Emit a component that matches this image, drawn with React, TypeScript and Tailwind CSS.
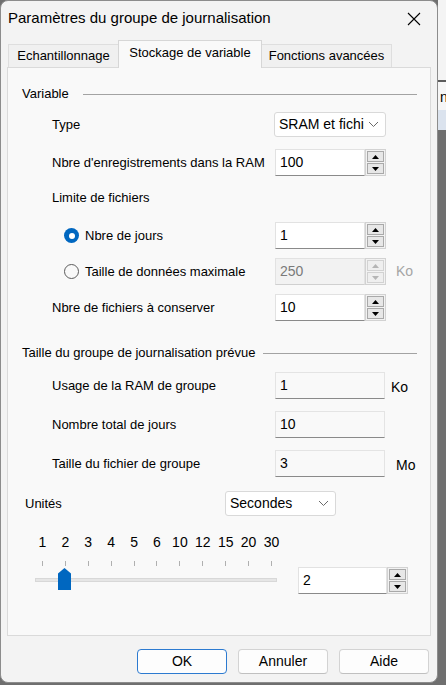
const font = "font-['Liberation_Sans',Arial,sans-serif]";

function Tri({ up, color = "#000" }: { up?: boolean; color?: string }) {
  return (
    <svg width="7" height="4" viewBox="0 0 7 4">
      <path d={up ? "M0 4 L3.5 0 L7 4Z" : "M0 0 L3.5 4 L7 0Z"} fill={color} />
    </svg>
  );
}

function Chevron() {
  return (
    <svg width="11" height="7" viewBox="0 0 11 7">
      <path d="M1 1 L5.5 5.5 L10 1" fill="none" stroke="#6a6a6a" strokeWidth="1" />
    </svg>
  );
}

function SpinBox({ value, disabled, w = "w-[111px]" }: { value: string; disabled?: boolean; w?: string }) {
  const btn = disabled
    ? "flex flex-1 items-center justify-center border border-[#d2d2d2] bg-[#efefef]"
    : "flex flex-1 items-center justify-center border border-[#a9a9a9] bg-[#e7e7e7]";
  return (
    <div className={`flex h-[27px] ${w}`}>
      <div
        className={`flex flex-1 items-center border border-[#e2e2e2] pl-[4px] text-[14px] ${
          disabled ? "border-b-[#d0d0d0] bg-[#f2f2f2] text-[#7a7a7a]" : "border-b-[#8a8a8a] bg-white text-black"
        }`}
      >
        {value}
      </div>
      <div className="flex w-[21px] flex-col gap-[1px] border border-[#d2d2d2] bg-[#f2f2f2] p-[1px]">
        <div className={btn}>
          <Tri up color={disabled ? "#b5b5b5" : "#000"} />
        </div>
        <div className={btn}>
          <Tri color={disabled ? "#b5b5b5" : "#000"} />
        </div>
      </div>
    </div>
  );
}

function ReadBox({ value }: { value: string }) {
  return (
    <div className="flex h-[27px] w-[110px] items-center border border-[#e4e4e4] border-b-[#8a8a8a] bg-[#f9f9f9] pl-[4px] text-[14px]">
      {value}
    </div>
  );
}

function Select({ value, w }: { value: string; w: string }) {
  return (
    <div className={`flex h-[25px] ${w} items-center overflow-hidden rounded-[3px] border border-[#d9d9d9] bg-white pl-[4px] pr-[6px]`}>
      <span className="flex-1 overflow-hidden whitespace-nowrap text-[14px]">{value}</span>
      <span className="ml-[4px]">
        <Chevron />
      </span>
    </div>
  );
}

function Header({ text, gap }: { text: string; gap: string }) {
  return (
    <div className="flex h-[16px] items-center pl-[14px] pr-[13px]">
      <span>{text}</span>
      <div className={`h-px flex-1 bg-[#a3a3a3] ${gap}`} />
    </div>
  );
}

function Radio({ checked }: { checked?: boolean }) {
  return checked ? (
    <div className="flex h-[15px] w-[15px] items-center justify-center rounded-full bg-[#0067c0]">
      <div className="h-[6px] w-[6px] rounded-full bg-white" />
    </div>
  ) : (
    <div className="h-[15px] w-[15px] rounded-full border border-[#5c5c5c] bg-[#f9f9f9]" />
  );
}

const scale = ["1", "2", "3", "4", "5", "6", "10", "12", "15", "20", "30"];

export default function App() {
  return (
    <div className={`flex h-[685px] w-[446px] bg-[#6f6f6f] text-[13px] text-black ${font}`}>
      <div className="flex h-[683px] w-[438px] flex-col rounded-[8px] border border-[#8c8c8c] bg-[#f3f3f3]">
        {/* title bar */}
        <div className="flex h-[35px] items-center justify-between pl-[7px] pr-[16px]">
          <span className="text-[15px]">Paramètres du groupe de journalisation</span>
          <svg width="14" height="14" viewBox="0 0 14 14">
            <path d="M1 1 L13 13 M13 1 L1 13" stroke="#000" strokeWidth="1.1" />
          </svg>
        </div>

        {/* tabs */}
        <div className="mt-[4px] flex h-[27px] items-end pl-[7px]">
          <div className="flex h-[23px] w-[110px] items-center justify-center border-l border-t border-[#dedede] bg-[#f0f0f0]">
            Echantillonnage
          </div>
          <div className="relative z-10 mb-[-1px] flex h-[28px] w-[144px] items-center justify-center border-x border-t border-[#d6d6d6] bg-[#f9f9f9] pb-[3px]">
            Stockage de variable
          </div>
          <div className="flex h-[23px] w-[130px] items-center justify-center border-r border-t border-[#dedede] bg-[#f0f0f0]">
            Fonctions avancées
          </div>
        </div>

        {/* panel */}
        <div className="mx-[6px] flex h-[569px] flex-col border border-[#dadada] bg-[#f9f9f9] pt-[18px]">
          <Header text="Variable" gap="ml-[14px]" />

          <div className="mt-[10px] flex h-[25px] items-center pl-[44px]">
            <span className="w-[222px]">Type</span>
            <Select value="SRAM et fichiers" w="w-[112px]" />
          </div>

          <div className="mt-[12px] flex h-[27px] items-center pl-[44px]">
            <span className="w-[223px]">Nbre d'enregistrements dans la RAM</span>
            <SpinBox value="100" />
          </div>

          <div className="mt-[14px] flex h-[16px] items-center pl-[44px]">Limite de fichiers</div>

          <div className="mt-[16px] flex h-[27px] items-center pl-[56px]">
            <span className="flex w-[211px] items-center gap-[6px]">
              <Radio checked />
              Nbre de jours
            </span>
            <SpinBox value="1" />
          </div>

          <div className="mt-[9px] flex h-[27px] items-center pl-[56px]">
            <span className="flex w-[211px] items-center gap-[6px]">
              <Radio />
              Taille de données maximale
            </span>
            <SpinBox value="250" disabled />
            <span className="ml-[10px] text-[14px] text-[#a5a5a5]">Ko</span>
          </div>

          <div className="mt-[9px] flex h-[27px] items-center pl-[44px]">
            <span className="w-[223px]">Nbre de fichiers à conserver</span>
            <SpinBox value="10" />
          </div>

          <div className="mt-[24px]">
            <Header text="Taille du groupe de journalisation prévue" gap="ml-[8px]" />
          </div>

          <div className="mt-[11px] flex h-[27px] items-center pl-[44px]">
            <span className="w-[223px]">Usage de la RAM de groupe</span>
            <ReadBox value="1" />
            <span className="ml-[6px] mt-[4px] text-[14px]">Ko</span>
          </div>

          <div className="mt-[12px] flex h-[27px] items-center pl-[44px]">
            <span className="w-[223px]">Nombre total de jours</span>
            <ReadBox value="10" />
          </div>

          <div className="mt-[12px] flex h-[27px] items-center pl-[44px]">
            <span className="w-[223px]">Taille du fichier de groupe</span>
            <ReadBox value="3" />
            <span className="ml-[11px] mt-[4px] text-[14px]">Mo</span>
          </div>

          <div className="mt-[14px] flex h-[25px] items-center pl-[17px]">
            <span className="w-[200px]">Unités</span>
            <Select value="Secondes" w="w-[111px]" />
          </div>

          {/* slider scale */}
          <div className="mt-[16px] grid h-[16px] w-[252px] grid-cols-11 items-center pl-0 ml-[23px] text-[14px]">
            {scale.map((n) => (
              <span key={n} className="text-center">
                {n}
              </span>
            ))}
          </div>

          <div className="mt-[9px] flex h-[36px] pl-[23px]">
            <div className="relative w-[252px]">
              <div className="mt-[4px] grid h-[5px] grid-cols-11">
                {scale.map((n) => (
                  <div key={n} className="flex justify-center">
                    <div className="h-full w-px bg-[#b0b0b0]" />
                  </div>
                ))}
              </div>
              <div className="ml-[4px] mt-[12px] h-[4px] w-[242px] border border-[#d8d8d8] bg-[#e6e6e6]" />
              <svg className="absolute left-[27px] top-[11px]" width="13" height="22" viewBox="0 0 13 22">
                <path d="M0 5.5 L6.5 0 L13 5.5 L13 22 L0 22 Z" fill="#0067c0" />
              </svg>
            </div>
            <div className="ml-[15px] mt-[10px]">
              <SpinBox value="2" w="w-[110px]" />
            </div>
          </div>
        </div>

        {/* buttons */}
        <div className="mt-[13px] flex justify-end gap-[11px] pr-[8px]">
          <button className="h-[25px] w-[90px] rounded-[4px] border border-[#2c7ad0] bg-[#fdfdfd] text-[14px]">OK</button>
          <button className="h-[25px] w-[90px] rounded-[4px] border border-[#d3d3d3] border-b-[#c0c0c0] bg-[#fdfdfd] text-[14px]">
            Annuler
          </button>
          <button className="h-[25px] w-[90px] rounded-[4px] border border-[#d3d3d3] border-b-[#c0c0c0] bg-[#fdfdfd] text-[14px]">
            Aide
          </button>
        </div>
      </div>

      {/* window behind, right edge */}
      <div className="flex w-[8px] flex-col">
        <div className="h-[80px] bg-[#f4f4f4]" />
        <div className="h-[2px] bg-[#5c5c5c]" />
        <div className="h-[28px] overflow-hidden bg-[#f6f6f6] pl-[2px] pt-[8px] text-[14px] leading-none">n</div>
        <div className="h-[20px] bg-[#dbe3ee]" />
        <div className="flex-1 bg-[#6f6f6f]" />
      </div>
    </div>
  );
}
